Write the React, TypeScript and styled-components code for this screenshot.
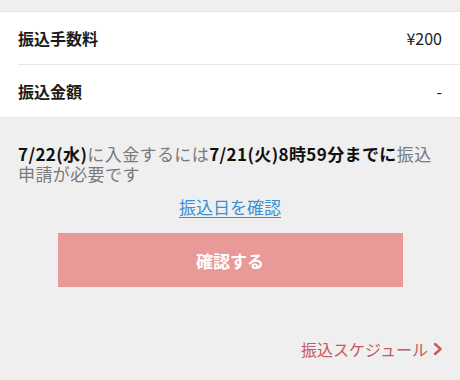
import React from "react";
import styled, { createGlobalStyle } from "styled-components";

const Global = createGlobalStyle`
  html, body { margin: 0; padding: 0; background: #efefef; }
  body { font-family: "Noto Sans CJK JP", "Noto Sans", sans-serif; }
`;

const Page = styled.div`
  width: 460px;
  height: 380px;
  background: #efefef;
  padding-top: 11px;
  box-sizing: border-box;
  overflow: hidden;
`;

const Card = styled.div`
  background: #fff;
  border-top: 1px solid #e6e6e6;
  border-bottom: 1px solid #e6e6e6;
  padding-left: 18px;
`;

const Row = styled.div<{ $divider?: boolean }>`
  height: 52px;
  display: flex;
  align-items: center;
  justify-content: space-between;
  padding-right: 18px;
  border-bottom: ${(p) => (p.$divider ? "1px solid #e8e8e8" : "none")};
`;

const Label = styled.span`
  font-size: 16px;
  font-weight: 700;
  color: #1a1a1a;
`;

const Value = styled.span`
  font-size: 16px;
  color: #1a1a1a;
`;

const Info = styled.div`
  padding: 26px 18px 0;
`;

const Notice = styled.p`
  margin: 0;
  font-size: 17px;
  line-height: 20px;
  color: #7a7a7a;
  letter-spacing: 0.4px;
`;

const Strong = styled.b`
  color: #111;
  font-weight: 700;
`;

const LinkRow = styled.div`
  display: flex;
  justify-content: center;
  margin-top: 12px;
`;

const Link = styled.a`
  font-size: 17px;
  color: #3b8fd6;
  text-decoration: underline;
  text-underline-offset: 3px;
  line-height: 22px;
`;

const ButtonRow = styled.div`
  display: flex;
  justify-content: center;
  margin-top: 15px;
`;

const Button = styled.button`
  width: 345px;
  height: 54px;
  border: none;
  background: #e99a98;
  color: #fff;
  font-family: inherit;
  font-size: 17px;
  font-weight: 700;
`;

const Footer = styled.div`
  display: flex;
  justify-content: flex-end;
  align-items: center;
  padding: 50px 16px 0 0;
  gap: 4px;
  color: #c8585a;
  font-size: 16px;
`;

export default function App() {
  return (
    <>
      <Global />
      <Page>
        <Card>
          <Row $divider>
            <Label>振込手数料</Label>
            <Value>¥200</Value>
          </Row>
          <Row>
            <Label>振込金額</Label>
            <Value>-</Value>
          </Row>
        </Card>
        <Info>
          <Notice>
            <Strong>7/22(水)</Strong>に入金するには<Strong>7/21(火)8時59分までに</Strong>振込申請が必要です
          </Notice>
        </Info>
        <LinkRow>
          <Link>振込日を確認</Link>
        </LinkRow>
        <ButtonRow>
          <Button>確認する</Button>
        </ButtonRow>
        <Footer>
          <span>振込スケジュール</span>
          <svg width="12" height="14" viewBox="0 0 12 14">
            <path d="M3 2 L8.5 7 L3 12" fill="none" stroke="#c8585a" strokeWidth="2.4" strokeLinecap="round" strokeLinejoin="round" />
          </svg>
        </Footer>
      </Page>
    </>
  );
}
